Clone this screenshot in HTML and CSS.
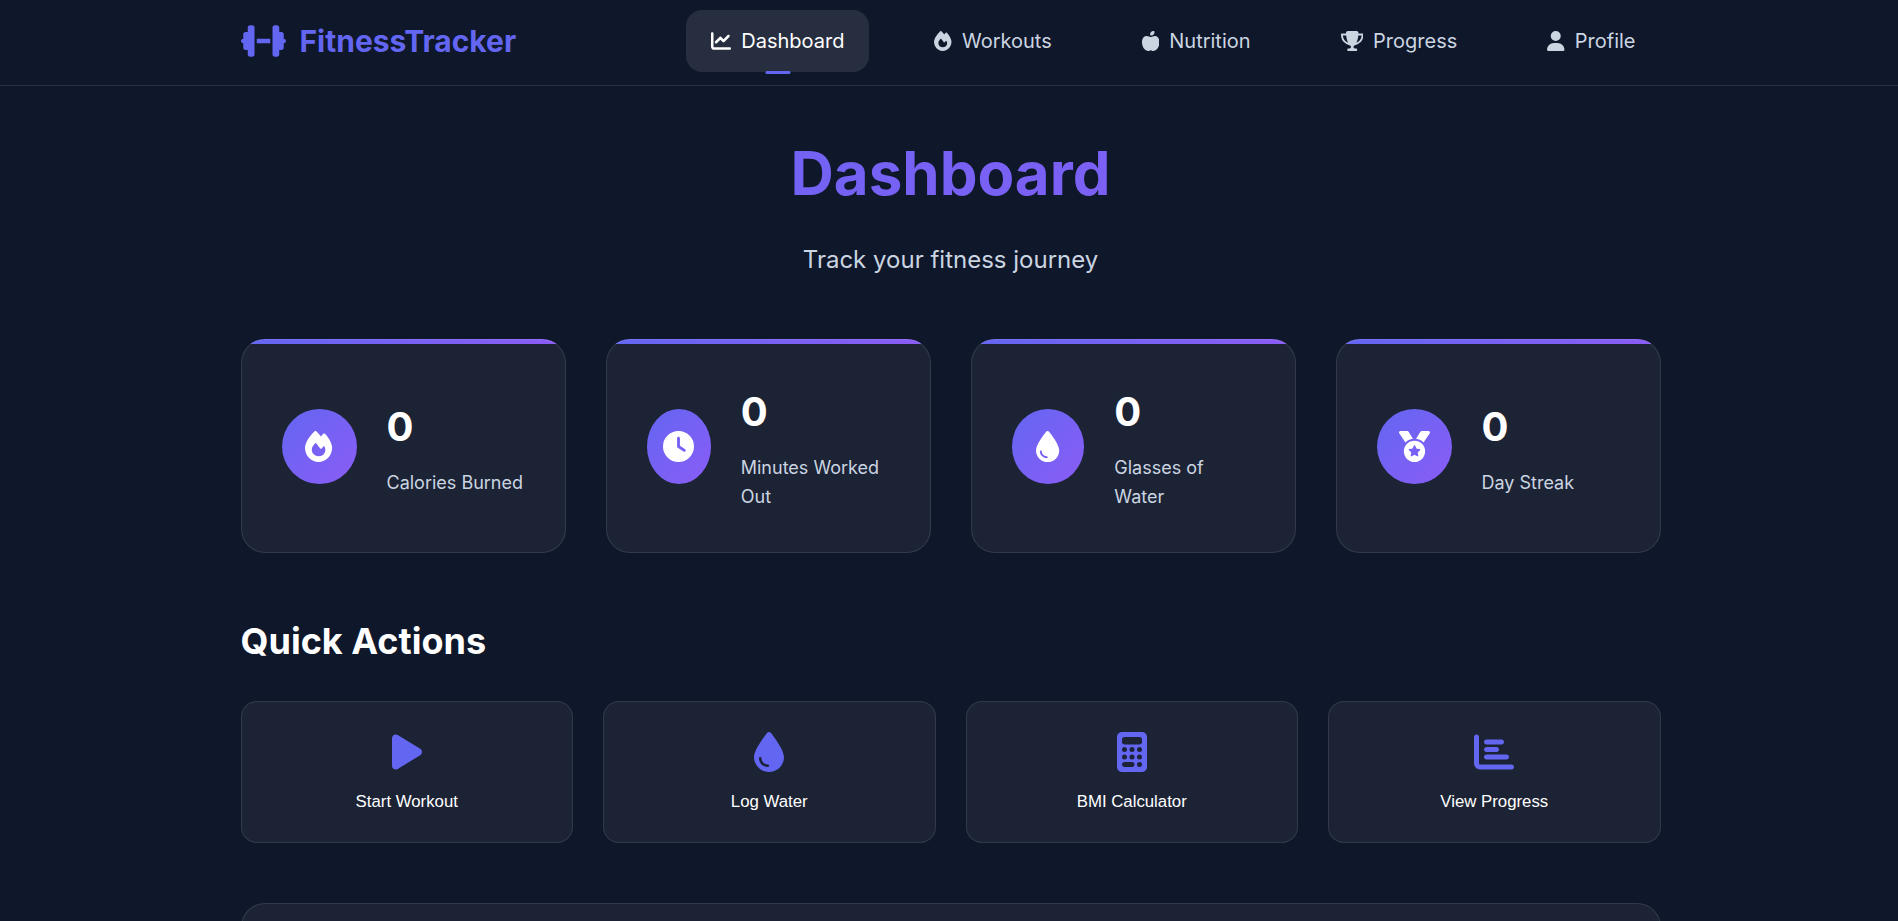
FILE: index.html
```html
<!DOCTYPE html>
<html lang="en">
  <head>
    <meta charset="UTF-8" />
    <meta name="viewport" content="width=device-width, initial-scale=1.0" />
    <title>FitnessTracker</title>
    <link rel="stylesheet" href="styles.css">
  </head>

  <body>
    <header class="header">
      <div class="header-inner">
        <a class="logo" href="#">
          <svg class="icon" viewBox="0 0 640 512"><path d="M96 64c0-17.7 14.3-32 32-32h32c17.7 0 32 14.3 32 32V224v64V448c0 17.7-14.3 32-32 32H128c-17.7 0-32-14.3-32-32V384H64c-17.7 0-32-14.3-32-32V288c-17.7 0-32-14.3-32-32s14.3-32 32-32V160c0-17.7 14.3-32 32-32H96V64zm448 0v64h32c17.7 0 32 14.3 32 32v64c17.7 0 32 14.3 32 32s-14.3 32-32 32v64c0 17.7-14.3 32-32 32H544v64c0 17.7-14.3 32-32 32H480c-17.7 0-32-14.3-32-32V288 224 64c0-17.7 14.3-32 32-32h32c17.7 0 32 14.3 32 32zM416 224v64H224V224H416z"/></svg>
          <span>FitnessTracker</span>
        </a>
        <nav class="nav">
          <a class="nav-link nav-link--active" href="#">
            <svg class="icon" viewBox="0 0 512 512"><path d="M64 64c0-17.7-14.3-32-32-32S0 46.3 0 64V400c0 44.2 35.8 80 80 80H480c17.7 0 32-14.3 32-32s-14.3-32-32-32H80c-8.8 0-16-7.2-16-16V64zm406.6 86.6c12.5-12.5 12.5-32.8 0-45.3s-32.8-12.5-45.3 0L320 210.7l-57.4-57.4c-12.5-12.5-32.8-12.5-45.3 0l-112 112c-12.5 12.5-12.5 32.8 0 45.3s32.8 12.5 45.3 0L240 221.3l57.4 57.4c12.5 12.5 32.8 12.5 45.3 0l128-128z"/></svg>
            <span>Dashboard</span>
          </a>
          <a class="nav-link" href="#">
            <svg class="icon" viewBox="0 0 448 512"><path d="M159.3 5.4c7.8-7.3 19.9-7.2 27.7 .1c27.6 25.9 53.5 53.8 77.7 84c11-14.4 23.5-30.1 37-42.9c7.9-7.4 20.1-7.4 28 .1c34.6 33 63.9 76.6 84.5 118c20.3 40.8 33.8 82.5 33.8 111.9C448 404.2 348.2 512 224 512C98.4 512 0 404.1 0 276.5c0-38.4 17.8-85.3 45.4-131.7C73.3 97.7 112.7 48.6 159.3 5.4zM225.7 416c25.3 0 47.7-7 68.8-21c42.1-29.4 53.4-88.2 28.1-134.4c-4.5-9-16-9.6-22.5-2l-25.2 29.3c-6.6 7.6-18.5 7.4-24.7-.5c-16.5-21-46-58.5-62.8-79.8c-6.3-8-18.3-8.1-24.7-.1c-33.8 42.5-50.8 69.3-50.8 99.4C112 375.4 162.6 416 225.7 416z"/></svg>
            <span>Workouts</span>
          </a>
          <a class="nav-link" href="#">
            <svg class="icon" viewBox="0 0 448 512"><path d="M224 112c-8.8 0-16-7.2-16-16V80c0-44.2 35.8-80 80-80h16c8.8 0 16 7.2 16 16V32c0 44.2-35.8 80-80 80H224zM0 288c0-76.3 35.7-160 112-160c27.3 0 59.7 10.3 82.7 19.3c18.8 7.3 39.9 7.3 58.7 0c22.9-8.9 55.4-19.3 82.7-19.3c76.3 0 112 83.7 112 160C448 416 368 512 288 512c-16 0-32-8-48-16c-10.1-5-21.9-5-32 0c-16 8-32 16-48 16C80 512 0 416 0 288z"/></svg>
            <span>Nutrition</span>
          </a>
          <a class="nav-link" href="#">
            <svg class="icon" viewBox="0 0 576 512"><path d="M400 0H176c-26.5 0-48.1 21.8-47.1 48.2c.2 5.3 .4 10.6 .7 15.8H24C10.7 64 0 74.7 0 88c0 92.6 33.5 157 78.5 200.7c44.3 43.1 98.3 64.8 138.1 75.8c23.4 6.5 39.4 26 39.4 45.6c0 20.9-17 37.9-37.9 37.9H192c-17.7 0-32 14.3-32 32s14.3 32 32 32H384c17.7 0 32-14.3 32-32s-14.3-32-32-32H357.9C337 448 320 431 320 410.1c0-19.6 15.9-39.2 39.4-45.6c39.9-11 93.9-32.7 138.2-75.8C542.5 245 576 180.6 576 88c0-13.3-10.7-24-24-24H446.4c.3-5.2 .5-10.4 .7-15.8C448.1 21.8 426.5 0 400 0zM48.9 112h84.4c9.1 90.1 29.2 150.3 51.9 190.6c-24.9-11-50.8-26.5-73.2-48.3c-32-31.1-58-76-63-142.3zM464.1 254.3c-22.4 21.8-48.3 37.3-73.2 48.3c22.7-40.3 42.8-100.5 51.9-190.6h84.4c-5.1 66.3-31.1 111.2-63 142.3z"/></svg>
            <span>Progress</span>
          </a>
          <a class="nav-link" href="#">
            <svg class="icon" viewBox="0 0 448 512"><path d="M224 256A128 128 0 1 0 224 0a128 128 0 1 0 0 256zm-45.7 48C79.8 304 0 383.8 0 482.3C0 498.7 13.3 512 29.7 512H418.3c16.4 0 29.7-13.3 29.7-29.7C448 383.8 368.2 304 269.7 304H178.3z"/></svg>
            <span>Profile</span>
          </a>
        </nav>
      </div>
    </header>

    <main class="main">
      <div class="page-head">
        <h1 class="page-title">Dashboard</h1>
        <p class="page-subtitle">Track your fitness journey</p>
      </div>

      <section class="stats">
        <div class="stat-card">
          <div class="stat-icon">
            <svg class="icon" viewBox="0 0 448 512"><path d="M159.3 5.4c7.8-7.3 19.9-7.2 27.7 .1c27.6 25.9 53.5 53.8 77.7 84c11-14.4 23.5-30.1 37-42.9c7.9-7.4 20.1-7.4 28 .1c34.6 33 63.9 76.6 84.5 118c20.3 40.8 33.8 82.5 33.8 111.9C448 404.2 348.2 512 224 512C98.4 512 0 404.1 0 276.5c0-38.4 17.8-85.3 45.4-131.7C73.3 97.7 112.7 48.6 159.3 5.4zM225.7 416c25.3 0 47.7-7 68.8-21c42.1-29.4 53.4-88.2 28.1-134.4c-4.5-9-16-9.6-22.5-2l-25.2 29.3c-6.6 7.6-18.5 7.4-24.7-.5c-16.5-21-46-58.5-62.8-79.8c-6.3-8-18.3-8.1-24.7-.1c-33.8 42.5-50.8 69.3-50.8 99.4C112 375.4 162.6 416 225.7 416z"/></svg>
          </div>
          <div class="stat-info">
            <h3 class="stat-value">0</h3>
            <p class="stat-label">Calories Burned</p>
          </div>
        </div>
        <div class="stat-card">
          <div class="stat-icon">
            <svg class="icon" viewBox="0 0 512 512"><path d="M256 0a256 256 0 1 1 0 512A256 256 0 1 1 256 0zM232 120V256c0 8 4 15.5 10.7 20l96 64c11 7.4 25.9 4.4 33.3-6.7s4.4-25.9-6.7-33.3L280 243.2V120c0-13.3-10.7-24-24-24s-24 10.7-24 24z"/></svg>
          </div>
          <div class="stat-info">
            <h3 class="stat-value">0</h3>
            <p class="stat-label">Minutes Worked Out</p>
          </div>
        </div>
        <div class="stat-card">
          <div class="stat-icon">
            <svg class="icon" viewBox="0 0 384 512"><path d="M192 512C86 512 0 426 0 320C0 228.8 130.2 57.7 166.6 11.7C172.6 4.2 181.5 0 191.1 0h1.8c9.6 0 18.5 4.2 24.5 11.7C253.8 57.7 384 228.8 384 320c0 106-86 192-192 192zM96 336c0-8.8-7.2-16-16-16s-16 7.2-16 16c0 61.9 50.1 112 112 112c8.8 0 16-7.2 16-16s-7.2-16-16-16c-44.2 0-80-35.8-80-80z"/></svg>
          </div>
          <div class="stat-info">
            <h3 class="stat-value">0</h3>
            <p class="stat-label">Glasses of Water</p>
          </div>
        </div>
        <div class="stat-card">
          <div class="stat-icon">
            <svg class="icon" viewBox="0 0 512 512"><path d="M4.1 38.2C1.4 34.2 0 29.4 0 24.6C0 11 11 0 24.6 0H133.9c11.2 0 21.7 5.9 27.4 15.5l68.5 114.1c-48.2 6.1-91.3 28.6-123.4 61.9L4.1 38.2zm503.7 0L405.6 191.5c-32.1-33.3-75.2-55.8-123.4-61.9L350.7 15.5C356.5 5.9 366.9 0 378.1 0H487.4C501 0 512 11 512 24.6c0 4.8-1.4 9.6-4.1 13.6zM80 336a176 176 0 1 1 352 0A176 176 0 1 1 80 336zm184.4-94.9c-3.4-7-13.3-7-16.8 0l-22.4 45.4c-1.4 2.8-4 4.7-7 5.1L168 298.9c-7.7 1.1-10.7 10.5-5.2 16l36.3 35.4c2.2 2.2 3.2 5.2 2.7 8.3l-8.6 49.9c-1.3 7.6 6.7 13.5 13.6 9.9l44.8-23.6c2.7-1.4 6-1.4 8.7 0l44.8 23.6c6.9 3.6 14.9-2.2 13.6-9.9l-8.6-49.9c-.5-3 .5-6.1 2.7-8.3l36.3-35.4c5.6-5.4 2.5-14.8-5.2-16l-50.1-7.3c-3-.4-5.7-2.4-7-5.1l-22.4-45.4z"/></svg>
          </div>
          <div class="stat-info">
            <h3 class="stat-value">0</h3>
            <p class="stat-label">Day Streak</p>
          </div>
        </div>
      </section>

      <section class="quick">
        <h2 class="section-title">Quick Actions</h2>
        <div class="actions">
          <button class="action-btn">
            <svg class="icon" viewBox="0 0 384 512"><path d="M73 39c-14.8-9.1-33.4-9.4-48.5-.9S0 62.6 0 80V432c0 17.4 9.4 33.4 24.5 41.9s33.7 8.1 48.5-.9L361 297c14.3-8.7 23-24.2 23-41s-8.7-32.2-23-41L73 39z"/></svg>
            <span>Start Workout</span>
          </button>
          <button class="action-btn">
            <svg class="icon" viewBox="0 0 384 512"><path d="M192 512C86 512 0 426 0 320C0 228.8 130.2 57.7 166.6 11.7C172.6 4.2 181.5 0 191.1 0h1.8c9.6 0 18.5 4.2 24.5 11.7C253.8 57.7 384 228.8 384 320c0 106-86 192-192 192zM96 336c0-8.8-7.2-16-16-16s-16 7.2-16 16c0 61.9 50.1 112 112 112c8.8 0 16-7.2 16-16s-7.2-16-16-16c-44.2 0-80-35.8-80-80z"/></svg>
            <span>Log Water</span>
          </button>
          <button class="action-btn">
            <svg class="icon" viewBox="0 0 384 512"><path d="M64 0C28.7 0 0 28.7 0 64V448c0 35.3 28.7 64 64 64H320c35.3 0 64-28.7 64-64V64c0-35.3-28.7-64-64-64H64zM96 64H288c17.7 0 32 14.3 32 32v32c0 17.7-14.3 32-32 32H96c-17.7 0-32-14.3-32-32V96c0-17.7 14.3-32 32-32zm32 160a32 32 0 1 1 -64 0 32 32 0 1 1 64 0zM96 352a32 32 0 1 1 0-64 32 32 0 1 1 0 64zM64 416c0-17.7 14.3-32 32-32h96c17.7 0 32 14.3 32 32s-14.3 32-32 32H96c-17.7 0-32-14.3-32-32zM192 256a32 32 0 1 1 0-64 32 32 0 1 1 0 64zm32 64a32 32 0 1 1 -64 0 32 32 0 1 1 64 0zm64-64a32 32 0 1 1 0-64 32 32 0 1 1 0 64zm32 64a32 32 0 1 1 -64 0 32 32 0 1 1 64 0zM288 448a32 32 0 1 1 0-64 32 32 0 1 1 0 64z"/></svg>
            <span>BMI Calculator</span>
          </button>
          <button class="action-btn">
            <svg class="icon" viewBox="0 0 512 512"><path d="M32 32c17.7 0 32 14.3 32 32V400c0 8.8 7.2 16 16 16H480c17.7 0 32 14.3 32 32s-14.3 32-32 32H80c-44.2 0-80-35.8-80-80V64C0 46.3 14.3 32 32 32zm96 96c0-17.7 14.3-32 32-32l192 0c17.7 0 32 14.3 32 32s-14.3 32-32 32l-192 0c-17.7 0-32-14.3-32-32zm32 64H288c17.7 0 32 14.3 32 32s-14.3 32-32 32H160c-17.7 0-32-14.3-32-32s14.3-32 32-32zm0 96H416c17.7 0 32 14.3 32 32s-14.3 32-32 32H160c-17.7 0-32-14.3-32-32s14.3-32 32-32z"/></svg>
            <span>View Progress</span>
          </button>
        </div>
      </section>

      <section class="panel"></section>
    </main>
  </body>
</html>
```

FILE: styles.css
```css
/* MAIN COLOR: #6366f1 */
/* BACKGROUND: #0f172a */

* {
  margin: 0;
  padding: 0;
  box-sizing: border-box;
}

html,
body {
  height: 100%;
  overflow: hidden;
}

body {
  font-family: "Inter", sans-serif;
  background-color: #0f172a;
  color: #fff;
  line-height: 1.6;
}

.icon {
  height: 1em;
  width: auto;
  flex-shrink: 0;
  fill: currentColor;
  display: block;
}

/* HEADER */
.header {
  border-bottom: 1px solid rgba(255, 255, 255, 0.1);
}
.header-inner {
  margin-left: 240.5px;
  width: 1420px;
  height: 85px;
  padding-bottom: 3px;

  display: flex;
  align-items: center;
  justify-content: space-between;
}
.logo {
  color: #6366f1;
  font-size: 30px;
  font-weight: 700;
  text-decoration: none;

  display: flex;
  align-items: center;
  gap: 14px;
}
.logo .icon {
  font-size: 36px;
}
.nav {
  display: flex;
  gap: 40px;
}
.nav-link {
  color: #cbd5e1;
  font-size: 20px;
  font-weight: 400;
  text-decoration: none;
  padding: 15px 25px;
  border-radius: 16px;
  position: relative;

  display: flex;
  align-items: center;
  gap: 10px;
}
.nav-link--active {
  color: #fff;
  background-color: rgba(255, 255, 255, 0.1);
}
.nav-link--active::after {
  content: "";
  position: absolute;
  left: 50%;
  bottom: -2px;
  transform: translateX(-50%);
  width: 25px;
  height: 3px;
  border-radius: 2px;
  background-color: #6366f1;
}

/* MAIN */
.main {
  margin-left: 240.5px;
  width: 1420px;
  padding-top: 39px;
}
.page-head {
  text-align: center;
  margin-bottom: 60px;
}
.page-title {
  font-size: 60px;
  font-weight: 700;
  margin-bottom: 20px;
  background: linear-gradient(135deg, #6366f1, #8b5cf6);
  -webkit-background-clip: text;
  background-clip: text;
  color: transparent;
}
.page-subtitle {
  font-size: 24px;
  color: #cbd5e1;
}

/* STATS */
.stats {
  display: grid;
  grid-template-columns: repeat(4, 1fr);
  gap: 40px;
  margin-bottom: 60px;
}
.stat-card {
  background: linear-gradient(90deg, #6366f1, #8b5cf6) border-box top / 100% 5px no-repeat,
    rgba(255, 255, 255, 0.055);
  border: 1px solid rgba(255, 255, 255, 0.1);
  border-radius: 24px;
  padding: 40px;

  display: flex;
  align-items: center;
  gap: 30px;
}
.stat-icon {
  width: 75px;
  height: 75px;
  border-radius: 50%;
  font-size: 31px;
  color: #fff;
  background: linear-gradient(135deg, #6366f1, #8b5cf6);

  display: flex;
  align-items: center;
  justify-content: center;
}
.stat-value {
  font-size: 40px;
  font-weight: 700;
  margin-bottom: 10px;
}
.stat-label {
  font-size: 18px;
  color: #cbd5e1;
}

/* QUICK ACTIONS */
.section-title {
  font-size: 36px;
  font-weight: 700;
  margin-bottom: 30px;
}
.actions {
  display: grid;
  grid-template-columns: repeat(4, 1fr);
  gap: 30px;
  margin-bottom: 60px;
}
.action-btn {
  font-family: "Liberation Sans", Arial, sans-serif;
  font-size: 16.8px;
  color: #fff;
  background-color: rgba(255, 255, 255, 0.055);
  border: 1px solid rgba(255, 255, 255, 0.1);
  border-radius: 16px;
  padding: 30px;
  cursor: pointer;

  display: flex;
  flex-direction: column;
  align-items: center;
  gap: 20px;
}
.action-btn .icon {
  font-size: 40px;
  color: #6366f1;
}

/* PANEL BELOW THE FOLD */
.panel {
  height: 300px;
  background-color: rgba(255, 255, 255, 0.055);
  border: 1px solid rgba(255, 255, 255, 0.1);
  border-radius: 24px;
}
```
